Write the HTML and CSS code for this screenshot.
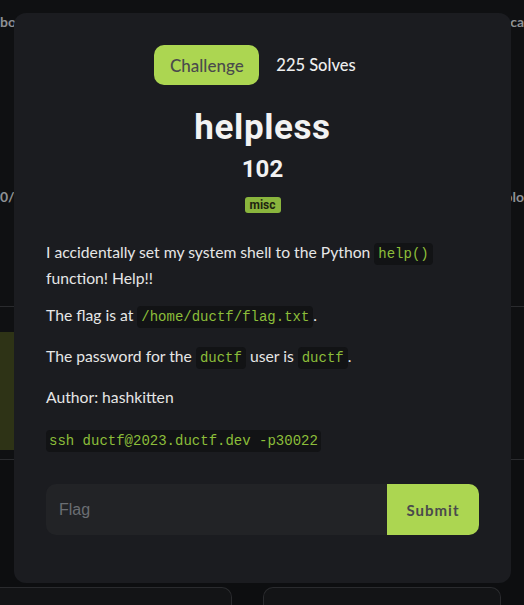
FILE: index.html
```html
<!DOCTYPE html>
<html>
<head>
<meta charset="utf-8">
<link rel="stylesheet" href="styles.css">
</head>
<body>
<div class="backdrop">
  <div class="bg-top">
    <div class="bg-row bg-row-name">
      <span>bo</span>
      <span>ca</span>
    </div>
    <div class="bg-row bg-row-score">
      <span>0/1</span>
      <span>blo</span>
    </div>
  </div>
  <div class="bg-mid">
    <div class="olive"></div>
  </div>
  <div class="bg-cards">
    <div class="bg-card"></div>
    <div class="bg-card"></div>
  </div>
</div>

<div class="modal">
  <div class="tabs">
    <span class="tab-active">Challenge</span>
    <span class="tab">225 Solves</span>
  </div>
  <h1 class="title">helpless</h1>
  <div class="points">102</div>
  <span class="tag">misc</span>

  <div class="desc">
    <p class="intro">I accidentally set my system shell to the Python <code>help()</code> function! Help!!</p>
    <p>The flag is at <code>/home/ductf/flag.txt</code>.</p>
    <p>The password for the <code>ductf</code> user is <code>ductf</code>.</p>
    <p>Author: hashkitten</p>
    <p class="cmd"><code>ssh ductf@2023.ductf.dev -p30022</code></p>
  </div>

  <form class="flag-form">
    <input class="flag-input" type="text" placeholder="Flag">
    <button class="submit" type="button">Submit</button>
  </form>
</div>
</body>
</html>
```

FILE: styles.css
```css
html, body {
  margin: 0;
  padding: 0;
  background: #0d0e10;
  width: 524px;
  height: 605px;
  overflow: hidden;
}

.backdrop {
  display: flex;
  flex-direction: column;
  height: 605px;
  overflow: hidden;
  font-family: "Lato", sans-serif;
  color: #8e9094;
}

.backdrop > * {
  flex-shrink: 0;
}

.bg-top {
  height: 307px;
  box-sizing: border-box;
  background: #0f1012;
  border-bottom: 1px solid #2a2b2e;
  display: flex;
  flex-direction: column;
}

.bg-row {
  display: flex;
  justify-content: space-between;
  font-size: 14px;
  line-height: 18px;
  font-weight: 700;
}

.bg-row-name {
  margin-top: 13px;
}

.bg-row-score {
  margin-top: 157px;
}

.bg-mid {
  height: 153px;
  box-sizing: border-box;
  padding-top: 25px;
  background: #0f1012;
  border-bottom: 1px solid #2a2b2e;
}

.olive {
  width: 200px;
  height: 118px;
  background: #2e3316;
  border-radius: 0 4px 4px 0;
}

.bg-cards {
  display: grid;
  grid-template-columns: 232px 238px;
  column-gap: 31px;
  margin-top: 127px;
}

.bg-card {
  height: 18px;
  background: #131416;
  border: 1px solid #2a2b2e;
  border-bottom: none;
  border-radius: 10px 10px 0 0;
}

.bg-card:first-child {
  border-left: none;
  border-top-left-radius: 0;
}

.modal {
  position: fixed;
  left: 14px;
  top: 13px;
  width: 497px;
  height: 570px;
  box-sizing: border-box;
  background: #1b1c20;
  border-radius: 12px;
  padding: 32px 32px 48px 32px;
  display: flex;
  flex-direction: column;
  align-items: center;
  font-family: "Lato", sans-serif;
  color: #e6e6e6;
}

.tabs {
  display: flex;
  align-items: center;
  gap: 17px;
  margin-right: 15px;
}

.tab-active {
  background: #acd651;
  color: #4a4a4c;
  border-radius: 10px;
  height: 40px;
  width: 105px;
  display: flex;
  align-items: center;
  justify-content: center;
  font-size: 17px;
  font-weight: 500;
}

.tab {
  font-size: 16.5px;
  font-weight: 500;
  color: #eeeeee;
}

.title {
  margin: 24px 0 0 0;
  font-family: "Roboto", sans-serif;
  font-weight: 700;
  font-size: 35px;
  line-height: 38px;
  color: #f2f2f2;
  letter-spacing: 0.6px;
}

.points {
  margin-top: 8px;
  font-family: "Roboto", sans-serif;
  font-weight: 700;
  font-size: 24px;
  line-height: 28px;
  color: #f2f2f2;
}

.tag {
  margin-top: 14px;
  background: #8ab53d;
  color: #1f2410;
  font-family: "Roboto", sans-serif;
  font-weight: 700;
  font-size: 12px;
  line-height: 16px;
  padding: 0 5px;
  border-radius: 3px;
}

.desc {
  align-self: stretch;
  margin-top: 26px;
  font-size: 15.7px;
  line-height: 26px;
}

.desc p {
  margin: 0 0 15px 0;
}

.desc p.intro {
  margin-bottom: 11px;
}

code {
  font-family: "Liberation Mono", monospace;
  font-size: 14px;
  line-height: 1;
  color: #8cbe3a;
  background: #121315;
  border-radius: 4px;
  padding: 3px 4px;
}

.desc p.cmd {
  margin-top: 16px;
}

.cmd code {
  padding: 3px 3px;
}

.flag-form {
  align-self: stretch;
  display: flex;
  margin-top: auto;
  height: 51px;
}

.flag-input {
  flex: 1;
  min-width: 0;
  border: none;
  outline: none;
  background: #222326;
  border-radius: 10px 0 0 10px;
  padding: 0 13px;
  font-family: "Liberation Sans", sans-serif;
  font-size: 16px;
  color: #e6e6e6;
}

.flag-input::placeholder {
  color: #6b6e73;
}

.submit {
  width: 92px;
  border: none;
  background: #acd651;
  color: #4a4a4c;
  border-radius: 0 10px 10px 0;
  font-family: "Lato", sans-serif;
  font-weight: 700;
  font-size: 15px;
  letter-spacing: 1px;
}
```
